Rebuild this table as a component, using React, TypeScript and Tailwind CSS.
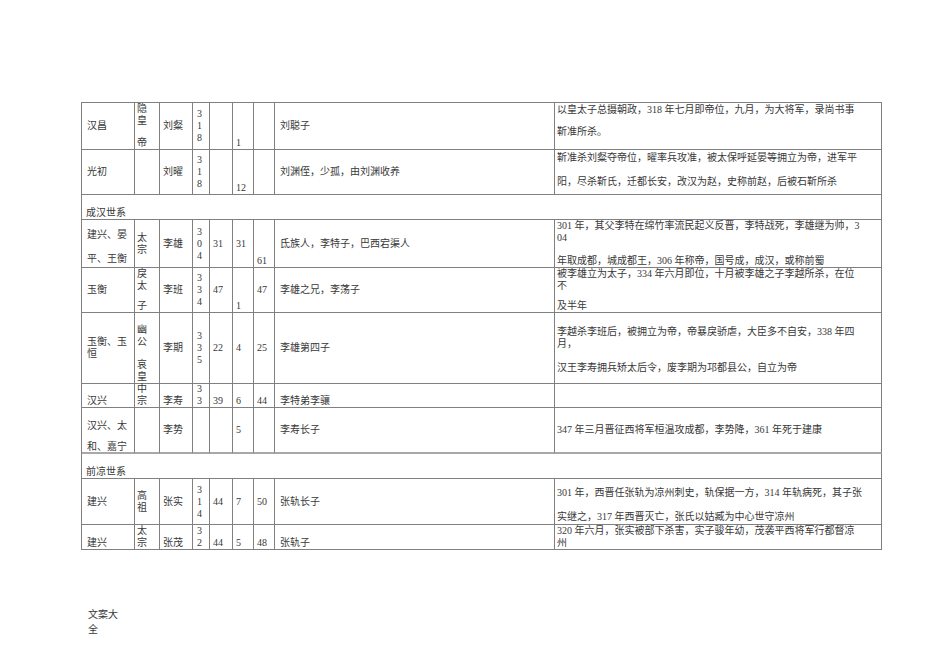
import clsx from 'clsx';

type Cell = { t: string[]; v?: 's' | 'c' | 'e'; pt?: string; gap?: string; blank?: string };
type Row = { cells: Cell[]; v?: 's' | 'c' | 'e'; bb?: string } | { section: string };

// left padding for each of the nine columns
const pads = ['pl-[5px]', 'pl-[2px]', 'pl-[3px]', 'pl-[4px]', 'pl-[3px]', 'pl-[3px]', 'pl-[3px]', 'pl-[5px]', 'pl-[2px]'];

const vAlign = { s: 'justify-start', c: 'justify-center', e: 'justify-end' };

const rows: Row[] = [
  {
    cells: [
      { t: ['汉昌'] },
      { t: ['隐', '皇', '', '帝'], v: 's', blank: 'h-[11px]' },
      { t: ['刘粲'] },
      { t: ['3', '1', '8'] },
      { t: [] },
      { t: ['1'], v: 'e' },
      { t: [] },
      { t: ['刘聪子'] },
      {
        t: ['以皇太子总摄朝政，318 年七月即帝位，九月，为大将军，录尚书事', '靳准所杀。'],
        v: 's',
        pt: 'pt-[1px]',
        gap: 'mt-[10px]',
      },
    ],
  },
  {
    cells: [
      { t: ['光初'] },
      { t: [] },
      { t: ['刘曜'] },
      { t: ['3', '1', '8'] },
      { t: [] },
      { t: ['12'], v: 'e' },
      { t: [] },
      { t: ['刘渊侄，少孤，由刘渊收养'] },
      {
        t: ['靳准杀刘粲夺帝位，曜率兵攻准，被太保呼延晏等拥立为帝，进军平', '阳，尽杀靳氏，迁都长安，改汉为赵，史称前赵，后被石靳所杀'],
        v: 's',
        pt: 'pt-[2px]',
        gap: 'mt-[12px]',
      },
    ],
  },
  { section: '成汉世系' },
  {
    cells: [
      { t: ['建兴、晏', '平、王衡'], v: 's', pt: 'pt-[9px]', gap: 'mt-[12px]' },
      { t: ['太', '宗'] },
      { t: ['李雄'] },
      { t: ['3', '0', '4'] },
      { t: ['31'] },
      { t: ['31'] },
      { t: ['61'], v: 'e' },
      { t: ['氐族人，李特子，巴西宕渠人'] },
      {
        t: ['301 年，其父李特在绵竹率流民起义反晋，李特战死，李雄继为帅，3', '04', '', '年取成都，城成都王，306 年称帝，国号成，成汉，或称前蜀'],
        v: 's',
        blank: 'h-[11px]',
      },
    ],
  },
  {
    cells: [
      { t: ['玉衡'] },
      { t: ['戾', '太', '', '子'], v: 's', blank: 'h-[9px]' },
      { t: ['李班'] },
      { t: ['3', '3', '4'] },
      { t: ['47'] },
      { t: ['1'], v: 'e' },
      { t: ['47'] },
      { t: ['李雄之兄，李荡子'] },
      { t: ['被李雄立为太子，334 年六月即位，十月被李雄之子李越所杀，在位', '不', '', '及半年'], v: 's', blank: 'h-[9px]' },
    ],
  },
  {
    cells: [
      { t: ['玉衡、玉', '恒'] },
      { t: ['幽', '公', '', '哀', '皇'], v: 's', pt: 'pt-[11px]' },
      { t: ['李期'] },
      { t: ['3', '3', '5'] },
      { t: ['22'] },
      { t: ['4'] },
      { t: ['25'] },
      { t: ['李雄第四子'] },
      {
        t: ['李越杀李班后，被拥立为帝，帝暴戾骄虐，大臣多不自安，338 年四', '月，', '', '汉王李寿拥兵矫太后令，废李期为邛都县公，自立为帝'],
        v: 's',
        pt: 'pt-[13px]',
      },
    ],
  },
  {
    v: 'e',
    cells: [
      { t: ['汉兴'] },
      { t: ['中', '宗'] },
      { t: ['李寿'] },
      { t: ['3', '3'] },
      { t: ['39'] },
      { t: ['6'] },
      { t: ['44'] },
      { t: ['李特弟李骧'] },
      { t: [] },
    ],
  },
  {
    bb: 'border-b-2 border-b-[#a8a8a8]',
    cells: [
      { t: ['汉兴、太', '和、嘉宁'], v: 's', pt: 'pt-[12px]', gap: 'mt-[9px]' },
      { t: [] },
      { t: ['李势'] },
      { t: [] },
      { t: [] },
      { t: ['5'] },
      { t: [] },
      { t: ['李寿长子'] },
      { t: ['347 年三月晋征西将军桓温攻成都，李势降，361 年死于建康'] },
    ],
  },
  { section: '前凉世系' },
  {
    cells: [
      { t: ['建兴'] },
      { t: ['高', '祖'] },
      { t: ['张实'] },
      { t: ['3', '1', '4'] },
      { t: ['44'] },
      { t: ['7'] },
      { t: ['50'] },
      { t: ['张轨长子'] },
      {
        t: ['301 年，西晋任张轨为凉州刺史，轨保据一方，314 年轨病死，其子张', '实继之，317 年西晋灭亡，张氏以姑臧为中心世守凉州'],
        v: 's',
        pt: 'pt-[8px]',
        gap: 'mt-[12px]',
      },
    ],
  },
  {
    v: 'e',
    cells: [
      { t: ['建兴'] },
      { t: ['太', '宗'] },
      { t: ['张茂'] },
      { t: ['3', '2'] },
      { t: ['44'] },
      { t: ['5'] },
      { t: ['48'] },
      { t: ['张轨子'] },
      { t: ['320 年六月，张实被部下杀害，实子骏年幼，茂袭平西将军行都督凉', '州'] },
    ],
  },
];

export default function App() {
  return (
    <div className="min-h-[672px] bg-white pl-[81px] pt-[102px] font-['Liberation_Serif','Noto_Sans_CJK_SC',serif] text-[10px] text-[#383838]">
      <div className="grid w-fit grid-cols-[53px_25px_33px_17px_23px_21px_21px_280px_327px] grid-rows-[47px_45px_25px_48px_45px_71px_24px_46px_25px_46px_25px] border-l border-t border-[#808080]">
        {rows.map((row, i) =>
          'section' in row ? (
            <div
              key={i}
              className="col-span-9 flex flex-col justify-end border-b border-r border-[#808080] pl-[4px]"
            >
              <div className="leading-[12px]">{row.section}</div>
            </div>
          ) : (
            row.cells.map((c, j) => (
              <div
                key={`${i}-${j}`}
                className={clsx(
                  'flex flex-col whitespace-nowrap border-r border-[#808080]',
                  row.bb ?? 'border-b',
                  pads[j],
                  vAlign[c.v ?? row.v ?? 'c'],
                  c.pt
                )}
              >
                {c.t.map((line, k) =>
                  line ? (
                    <div key={k} className={clsx('leading-[12px]', k > 0 && c.gap)}>
                      {line}
                    </div>
                  ) : (
                    <div key={k} className={c.blank ?? 'h-[12px]'} />
                  )
                )}
              </div>
            ))
          )
        )}
      </div>

      {/* page footer */}
      <div className="mt-[57px] pl-[7px] leading-[15px]">
        <div>文案大</div>
        <div>全</div>
      </div>
    </div>
  );
}
